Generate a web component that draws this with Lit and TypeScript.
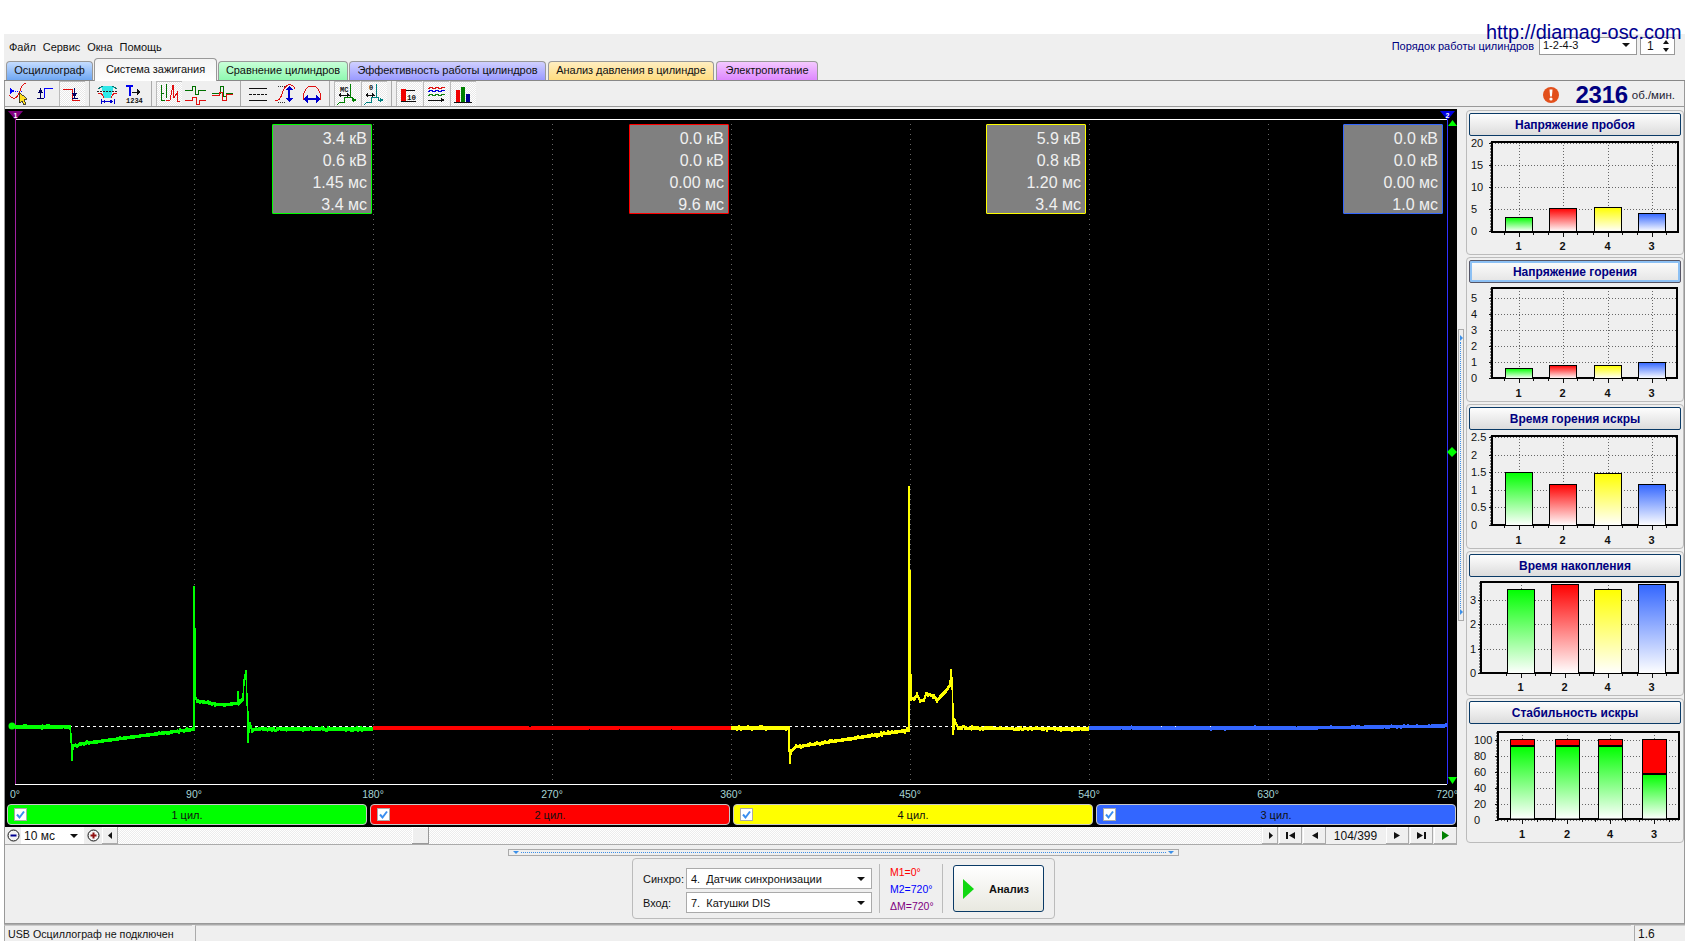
import { LitElement, html, css, svg } from "lit";
import { customElement } from "lit/decorators.js";

const GREEN = "#00ff00", RED = "#ff0000", YELLOW = "#ffff00", BLUE = "#3366ff";
const CYL = [
  { n: "1", c: "green" },
  { n: "2", c: "red" },
  { n: "4", c: "yellow" },
  { n: "3", c: "blue" },
];

let seed = 17;
const rnd = () => {
  seed = (seed * 16807) % 2147483647;
  return seed / 2147483647;
};
function trace(pts: number[][], amp: number): string {
  let d = `M${pts[0][0]} ${pts[0][1]}`;
  for (let i = 1; i < pts.length; i++) {
    const [x0, y0] = pts[i - 1];
    const [x1, y1] = pts[i];
    if (x1 - x0 < 2) {
      d += `L${x1} ${y1}`;
      continue;
    }
    for (let x = x0 + 1; x <= x1; x++) {
      const y = y0 + ((y1 - y0) * (x - x0)) / (x1 - x0);
      const j = rnd() > 0.72 ? (rnd() - 0.5) * amp : 0;
      d += `L${x} ${(y + j).toFixed(1)}`;
    }
  }
  return d;
}

const greenPts = [[15,726],[70,726],[71,735],[72,759],[73,745],[80,743],[194,728],[194,586],[195,640],[195,695],[197,700],[215,703],[225,704],[238,702],[238,691],[239,702],[243,698],[244,680],[246,670],[247,700],[248,715],[248,741],[249,728],[250,722],[252,729],[260,728],[373,728]];
const yellowPts = [[731,727],[789,727],[789,745],[790,762],[791,750],[796,746],[909,729],[909,486],[910,595],[911,698],[915,698],[917,693],[920,700],[924,699],[926,694],[935,695],[937,700],[940,696],[946,690],[950,684],[951,669],[952,680],[953,710],[953,733],[955,721],[958,727],[1089,728]];
const redPts = [[373,727],[731,727]];
const bluePts = [[1089,727],[1300,727],[1447,725]];

const ANGLES = [0, 90, 180, 270, 360, 450, 540, 630, 720];
const BOXES = [
  { l: 267, c: "green", v: ["3.4 кВ", "0.6 кВ", "1.45 мс", "3.4 мс"] },
  { l: 624, c: "red", v: ["0.0 кВ", "0.0 кВ", "0.00 мс", "9.6 мс"] },
  { l: 981, c: "yellow", v: ["5.9 кВ", "0.8 кВ", "1.20 мс", "3.4 мс"] },
  { l: 1338, c: "blue", v: ["0.0 кВ", "0.0 кВ", "0.00 мс", "1.0 мс"] },
];

const steps = (labels: string[], y0: number, st: number) => labels.map((l, i) => [l, y0 + i * st] as [string, number]);
const CHARTS = [
  { title: "Напряжение пробоя", top: 110, f: [1492, 142, 1678, 232], lx: 1471, ticks: steps(["20", "15", "10", "5", "0"], 143, 22), bx: [1505, 1549, 1594, 1638], w: 27, tops: [217, 208, 207, 213], base: 231, xl: 250 },
  { title: "Напряжение горения", focus: true, top: 257, f: [1492, 288, 1677, 378], lx: 1471, ticks: steps(["5", "4", "3", "2", "1", "0"], 298, 16), bx: [1505, 1549, 1594, 1638], w: 27, tops: [368, 365, 365, 362], base: 378, xl: 397 },
  { title: "Время горения искры", top: 404, f: [1492, 436, 1677, 525], lx: 1471, ticks: steps(["2.5", "2", "1.5", "1", "0.5", "0"], 437, 17.6), bx: [1505, 1549, 1594, 1638], w: 27, tops: [472, 484, 473, 484], base: 525, xl: 544 },
  { title: "Время накопления", top: 551, f: [1481, 582, 1678, 673], lx: 1470, ticks: steps(["3", "2", "1", "0"], 600, 24.4), bx: [1507, 1551, 1594, 1638], w: 27, tops: [589, 584, 589, 584], base: 673, xl: 691 },
  { title: "Стабильность искры", top: 698, f: [1498, 732, 1679, 819], lx: 1474, ticks: steps(["100", "80", "60", "40", "20", "0"], 740, 16), bx: [1510, 1555, 1598, 1642], w: 24, tops: [739, 739, 739, 739], base: 819, xl: 838, split: [745, 745, 745, 773] },
];

const ICONS = [
  svg`<path d="M5 7l5 3-5 3z" fill="#0000ff"/><path d="M10 10h7" stroke="#0000ff" stroke-dasharray="1 1"/><path d="M4 14q3 4 6 3t5-7q2-7 6-8" stroke="#e01010" fill="none"/><path d="M14 11l0 11 3-2 2 4 2-1-2-4 3-1z" fill="#ffe020" stroke="#222" stroke-width=".8"/>`,
  svg`<path d="M12 17V7h9" stroke="#0000ff" fill="none"/><path d="M8.500 9v8M5 17h7" stroke="#000060" fill="none"/><path d="M6 12l2.500-5 2.500 5z" fill="#000060"/>`,
  svg`<path d="M4 8h9v11h8" stroke="#e01010" fill="none"/><path d="M15.500 7v7M13 17h6" stroke="#000060" fill="none"/><path d="M13 12l2.500 5 2.500-5z" fill="#000060"/>`,
  svg`<path d="M7 5h13l-2 7-1 5h-7l-1-5z" fill="#30e8e8"/><path d="M3 10h21" stroke="#222" stroke-dasharray="2 1"/><path d="M4 8q3-2 5-3M23 8q-3-2-5-3" stroke="#107070" fill="none"/><path d="M4 13q4-2 6 4M23 13q-4-2-6 4" stroke="#e01010" fill="none"/><path d="M7 18v5M20 18v5M8 20.500h11" stroke="#0000d0" fill="none"/><path d="M8 20.500l3-2v4zM19 20.500l-3-2v4z" fill="#0000d0"/>`,
  svg`<path d="M5 5h7M8.500 5v10" stroke="#0000ee" fill="none" stroke-width="2"/><path d="M11 11h8" stroke="#111"/><path d="M16 8l4 3-4 3z" fill="#111"/><text x="5" y="22" font-family="Liberation Mono, monospace" font-size="7" font-weight="700" fill="#111">1234</text>`,
  svg`<path d="M5 4v15h4M5 12h3M10 3v14" stroke="#007000" fill="none"/><path d="M10 19h4l3-15 1 13 3-5v8h3" stroke="#e01010" fill="none"/>`,
  svg`<path d="M2 9h7V5h3v8h3V9h8" stroke="#007000" fill="none"/><path d="M2 19h7v-3h4v7h3v-4h7" stroke="#e01010" fill="none"/>`,
  svg`<path d="M2 12h8V5h3v10h3v-3h7" stroke="#007000" fill="none"/><path d="M2 14h7v-3h3v8h4v-6h7" stroke="#e01010" fill="none"/>`,
  svg`<path d="M4 7h18M4 19.500h18" stroke="#111"/><path d="M4 13h18" stroke="#111" stroke-dasharray="3 1"/>`,
  svg`<path d="M6 5h8M6 21h8" stroke="#333" stroke-dasharray="1 1"/><path d="M3 20q5 0 7-7t6-9q5-1 7 4" stroke="#e01010" fill="none"/><path d="M17 8v10" stroke="#0000d0" stroke-width="2"/><path d="M13 9l4-4 4 4zM13 17l4 4 4-4z" fill="#0000d0"/>`,
  svg`<path d="M4 19c0-9 4-14 9-14s9 5 9 14" stroke="#e01010" fill="none"/><path d="M7 18h12" stroke="#0000d0" stroke-width="2"/><path d="M9 14l-5 4 5 4zM17 14l5 4-5 4z" fill="#0000d0"/>`,
  svg`<text x="6" y="11" font-family="Liberation Mono, monospace" font-size="7" font-weight="700" fill="#111">MC</text><path d="M5 14h11" stroke="#111"/><path d="M16 3v13h2v3h4M3 24l3-3h4v-5h6" stroke="#008000" fill="none"/><path d="M19 17l4 2-4 2z" fill="#008000"/><path d="M4 14l3-2v4zM16 14l-3-2v4z" fill="#111"/>`,
  svg`<text x="8" y="9" font-family="Liberation Mono, monospace" font-size="7" font-weight="700" fill="#111">0</text><path d="M5 14h9" stroke="#111"/><path d="M15 3v13h2v3h5M3 24l3-3h4v-5h5" stroke="#008080" fill="none"/><path d="M19 17l4 2-4 2z" fill="#008080"/><path d="M4 14l3-2v4zM14 14l-3-2v4z" fill="#111"/>`,
  svg`<rect x="5" y="8" width="5" height="12" fill="#f00000"/><path d="M10 9.500h9M5 20.500h15" stroke="#111"/><text x="11" y="19" font-family="Liberation Mono, monospace" font-size="7.500" font-weight="700" fill="#111">10</text>`,
  svg`<path d="M5 8l3-2 3 2 3-2 3 2 3-2 2 1" stroke="#e01010" fill="none"/><path d="M5 11l3-2 3 2 3-2 3 2 3-2 2 1" stroke="#0000e0" fill="none"/><path d="M5 15l3-2 3 2 3-2 3 2 3-2 2 1" stroke="#108010" fill="none"/><path d="M5 19h14" stroke="#111"/><path d="M18 17l4 2-4 2z" fill="#111"/>`,
  svg`<rect x="6" y="9" width="4" height="12" fill="#f00000"/><rect x="11" y="6" width="4" height="15" fill="#008000"/><rect x="16" y="13" width="4" height="8" fill="#000090"/><path d="M4 21.500h18" stroke="#111"/>`,
];
const GROUPS = [
  { ids: [0, 1, 2], on: [2] },
  { ids: [3, 4], on: [] as number[] },
  { ids: [5, 6, 7], on: [5] },
  { ids: [8, 9, 10], on: [] as number[] },
  { ids: [11, 12], on: [11, 12] },
  { ids: [13, 14, 15], on: [13, 14, 15] },
];

const TABS = [
  { t: "Осциллограф", c: "t1" },
  { t: "Система зажигания", c: "t2" },
  { t: "Сравнение цилиндров", c: "t3" },
  { t: "Эффективность работы цилиндров", c: "t4" },
  { t: "Анализ давления в цилиндре", c: "t5" },
  { t: "Электропитание", c: "t6" },
];

@customElement("app-root")
export class AppRoot extends LitElement {
  static styles = css`
    :host {
      display: block;
      position: relative;
      width: 1696px;
      height: 946px;
      box-sizing: border-box;
      padding: 34px 11px 5px 4px;
      background: #fff;
      overflow: hidden;
      font: 11px "Liberation Sans", Arial, sans-serif;
      color: #111;
    }
    .shell { height: 100%; background: #efefef; display: flex; flex-direction: column; }
    .watermark { position: absolute; left: 1486px; top: 20px; font-size: 19.900px; color: #000090; line-height: 24px; white-space: nowrap; }
    .topbar { height: 24px; display: flex; justify-content: space-between; align-items: flex-start; padding: 3px 10px 0 5px; box-sizing: border-box; }
    .menu { display: flex; gap: 7px; padding-top: 4px; letter-spacing: -.05px; }
    .order { display: flex; align-items: center; color: #000080; }
    .sel { background: #fff; border: 1px solid #999; box-sizing: border-box; display: flex; align-items: center; justify-content: space-between; color: #111; }
    .sel1 { width: 98px; height: 18px; margin-left: 5px; padding: 0 6px 2px 3px; }
    .sel2 { width: 35px; height: 18px; margin-left: 3px; padding: 0 5px 0 6px; font-size: 12px; }
    .arrow { width: 0; height: 0; border: 4px solid transparent; border-top: 4px solid #111; border-bottom: 0; }
    .spin { display: flex; flex-direction: column; gap: 4px; }
    .spin i { display: block; width: 0; height: 0; border: 3.500px solid transparent; }
    .spin i:first-child { border-top: 0; border-bottom: 4px solid #111; }
    .spin i:last-child { border-bottom: 0; border-top: 4px solid #111; }
    .tabs { height: 23px; display: flex; align-items: flex-end; gap: 1px; padding-left: 2px; border-bottom: 1px solid #888; box-sizing: border-box; letter-spacing: -.05px; }
    .tab { height: 19px; padding-bottom: 2px; border: 1px solid #999; border-bottom: 0; border-radius: 4px 4px 0 0; box-sizing: border-box; display: flex; align-items: center; justify-content: center; white-space: nowrap; }
    .t1 { width: 87px; background: linear-gradient(#c4dcff, #6fa7f2); }
    .t2 { width: 123px; height: 23px; margin-bottom: -1px; position: relative; padding-bottom: 3px; background: linear-gradient(#f4f4f4, #fff); }
    .t3 { width: 130px; background: linear-gradient(#c8ffd8, #8ff8b0); }
    .t4 { width: 197px; background: linear-gradient(#d0d0ff, #9a9aff); }
    .t5 { width: 166px; margin-left: 1px; background: linear-gradient(#ffeec0, #ffdc80); }
    .t6 { width: 102px; margin-left: 1px; background: linear-gradient(#f4c8ff, #de88ff); }
    .toolbar { height: 26px; display: flex; align-items: flex-start; border: 1px solid #999; border-width: 0 1px 1px; box-sizing: border-box; padding-right: 9px; }
    .tgroup { display: flex; gap: 1px; }
    .cell { width: 26px; height: 25px; display: block; shape-rendering: crispEdges; }
    .cell.on { background: repeating-conic-gradient(#fff 0 25%, #e8e8e8 0 50%) 0 0 / 2px 2px; box-shadow: inset 1px 1px 0 #bbb; }
    .sep { width: 1px; height: 25px; background: #aaa; margin: 0 4px; }
    .rpm { margin-left: auto; display: flex; align-items: center; height: 27px; color: #000080; }
    .rpm svg { margin-right: 16px; }
    .rpm b { font-size: 24px; letter-spacing: -.3px; margin-right: 4px; }
    .rpm span { font-size: 11.500px; color: #223; }
    .main { flex: 1; display: flex; gap: 7px; padding: 2px 2px 0 0; border: 1px solid #999; border-width: 0 1px 1px; box-sizing: border-box; min-height: 0; }
    .left { width: 1454px; }
    .scope { width: 1452px; height: 718px; background: #000; position: relative; }
    .scope > svg { display: block; }
    .box { position: absolute; top: 15px; width: 100px; height: 90px; box-sizing: border-box; background: #808080; border: 1px solid; border-radius: 1px; padding: 3px 4px 0 0; color: #f0f0f0; font-size: 16px; line-height: 22px; text-align: right; }
    .b-green { border-color: #00ff00; }
    .b-red { border-color: #ff0000; }
    .b-yellow { border-color: #ffff00; }
    .b-blue { border-color: #3366ff; }
    .cyls { display: grid; grid-template-columns: repeat(4, 1fr); gap: 3px; padding: 0 1px 0 2px; }
    .cyl { height: 21px; border: 1px solid #c8c8c8; border-radius: 4px; box-sizing: border-box; display: flex; align-items: center; justify-content: center; position: relative; color: #111; }
    .c-green { background: #00ff00; }
    .c-red { background: #ff0000; }
    .c-yellow { background: #ffff00; }
    .c-blue { background: #3366ff; }
    .check { position: absolute; left: 6px; top: 3px; width: 13px; height: 13px; background: #fff; border: 1px solid #aaa; box-sizing: border-box; }
    .check svg { display: block; }
    .scroll { height: 18px; width: 1452px; display: flex; align-items: stretch; border-bottom: 1px solid #aaa; box-sizing: border-box; padding-left: 1px; }
    .nb { width: 23px; background: #efefef; box-shadow: inset -1px -1px 0 #aaa, inset 1px 1px 0 #fff; display: flex; align-items: center; justify-content: center; margin-left: 1px; }
    .nb.sm { width: 16px; }
    .rnd { width: 15px; display: flex; align-items: center; justify-content: center; background: #eee; }
    .zoomsel { width: 63px; background: #fff; display: flex; align-items: center; justify-content: space-between; padding: 0 6px 0 3px; box-sizing: border-box; font-size: 12px; margin-right: 2px; }
    .track { flex: 1; position: relative; background: repeating-conic-gradient(#fff 0 25%, #ececec 0 50%) 0 0 / 2px 2px; }
    .thumb { position: absolute; left: 294px; top: 0; width: 17px; height: 17px; background: #efefef; box-shadow: inset -1px -1px 0 #999, inset 1px 1px 0 #fff; }
    .counter { width: 59px; margin-left: 0; display: flex; align-items: center; justify-content: center; background: #f0f0f0; font-size: 12px; }
    .vsplit { position: absolute; left: 1458px; top: 329px; width: 6px; height: 292px; border: 1px solid #aaa; box-sizing: border-box; }
    .vsplit::before { content: ""; position: absolute; top: 12px; bottom: 12px; left: 1px; border-left: 1px dotted #3b8fe8; }
    .vsplit i { position: absolute; left: 1px; border: 3px solid transparent; border-left: 3px solid #3b8fe8; border-right: 0; }
    .vsplit i:first-child { top: 5px; }
    .vsplit i:last-child { bottom: 5px; }
    .hsplit { margin: 4px 0 0 503px; width: 671px; height: 7px; border: 1px solid #aaa; box-sizing: border-box; position: relative; }
    .hsplit::before { content: ""; position: absolute; left: 12px; right: 12px; top: 2px; border-top: 1px dotted #3b8fe8; }
    .hsplit i { position: absolute; top: 1px; border: 3px solid transparent; border-top: 3px solid #3b8fe8; border-bottom: 0; }
    .hsplit i:first-child { left: 4px; }
    .hsplit i:last-child { right: 4px; }
    .ana { margin: 2px 0 0 627px; width: 423px; height: 61px; border: 1px solid #bbb; border-radius: 4px; box-sizing: border-box; display: flex; align-items: center; }
    .ana-l { display: grid; grid-template-columns: 43px 186px; row-gap: 3px; align-items: center; padding: 4px 0 0 10px; }
    .dd { height: 21px; background: #fff; border: 1px solid #aaa; box-sizing: border-box; display: flex; align-items: center; justify-content: space-between; padding: 0 6px 0 4px; white-space: pre; }
    .vl { width: 1px; height: 49px; background: #bbb; }
    .marks { width: 62px; padding: 2px 0 0 10px; box-sizing: border-box; line-height: 17px; font-size: 10.500px; }
    .m1 { color: #ff0000; }
    .m2 { color: #0000ff; }
    .m3 { color: #800080; }
    .run { margin-left: 10px; width: 91px; height: 47px; border: 1px solid #0a3a66; border-radius: 3px; box-sizing: border-box; background: linear-gradient(#fff, #e8e8e0); display: flex; align-items: center; font-weight: 700; }
    .run svg { margin: 0 15px 0 9px; }
    .right { width: 216px; margin-top: 1px; display: grid; grid-template-rows: repeat(5, 145px); gap: 2px; }
    .panel { border: 1px solid #bbb; border-radius: 4px; box-sizing: border-box; padding: 2px 2px 0; }
    .phead { height: 23px; border: 1px solid #0a3a66; border-radius: 2px; box-sizing: border-box; background: linear-gradient(#fdfdfd, #dcdcdc); color: #000080; font-weight: 700; font-size: 12px; display: flex; align-items: center; justify-content: center; }
    .phead.focus { border-color: #556; box-shadow: inset 0 0 0 2px #8cc0f4; background: linear-gradient(#fdfdfd, #e4e4e4); }
    .panel svg { display: block; margin-left: -2px; }
    .status { height: 17px; border-top: 1px solid #aaa; display: flex; gap: 3px; box-sizing: border-box; }
    .scell { border-left: 1px solid #aaa; border-top: 1px solid #ccc; display: flex; align-items: center; padding-left: 3px; box-sizing: border-box; white-space: nowrap; font-size: 10.700px; }
    .s1 { width: 188px; }
    .s2 { flex: 1; }
    .s3 { width: 51px; font-size: 12px; }
  `;

  private tri(d: string, fill = "#111") {
    return html`<svg width="11" height="11" viewBox="0 0 11 11"><path d=${d} fill=${fill}></path></svg>`;
  }

  private renderScope() {
    seed = 17;
    const fat = (pts: number[][], amp: number, color: string) => {
      const d = trace(pts, amp);
      return [-1, 0, 1].map((o) => svg`<path d=${d} transform="translate(0 ${o + 1})" stroke=${color} stroke-width="1.500"></path>`);
    };
    return svg`
      ${ANGLES.map((a, i) => {
        const x = 15 + i * 179;
        return svg`
          ${i > 0 && i < 8 ? svg`<path d="M${x + 0.5} 119V787" stroke="#666" stroke-dasharray="1 4"></path>` : ""}
          <text x=${x} y="798" text-anchor="middle" font-size="10.500" font-family="Liberation Sans, Arial, sans-serif" fill="#a6d4d4">${a}°</text>`;
      })}
      <path d="M15 119.500H1447M15 784.500H1447" stroke="#fff" stroke-width="1"></path>
      <path d="M15 726.500H1447" stroke="#fff" stroke-dasharray="3 3"></path>
      <path d="M15.500 111V784" stroke="#a020a0"></path>
      <path d="M1447.500 111V784" stroke="#3030ff"></path>
      <g fill="none" shape-rendering="crispEdges">
        ${fat(greenPts, 3, GREEN)}
        ${fat(redPts, 1, RED)}
        ${fat(yellowPts, 3, YELLOW)}
        ${fat(bluePts, 2, BLUE)}
      </g>
      <circle cx="12" cy="726" r="3.500" fill=${GREEN}></circle>
      <path d="M8 111h15l-7.500 9z" fill="#800080"></path>
      <text x="15.500" y="118" text-anchor="middle" font-size="7" font-weight="700" font-family="Liberation Sans, Arial, sans-serif" fill="#fff">1</text>
      <path d="M1440 111h15l-7.500 9z" fill="#0000e0"></path>
      <text x="1447.500" y="118" text-anchor="middle" font-size="7" font-weight="700" font-family="Liberation Sans, Arial, sans-serif" fill="#fff">2</text>
      <path d="M1448 126l4.500-6 4.500 6z" fill=${GREEN}></path>
      <path d="M1452 447l5 5-5 5-5-5z" fill=${GREEN}></path>
      <path d="M1448 777h9l-4.500 7z" fill=${GREEN}></path>
    `;
  }

  private renderChart(c: (typeof CHARTS)[number]) {
    const [l, t, r, b] = c.f;
    const vy = c.top + 26;
    const colors = [GREEN, RED, YELLOW, BLUE];
    const ids = ["g", "r", "y", "b"];
    const centres = c.bx.map((x) => x + c.w / 2);
    const ticks: number[] = [];
    centres.forEach((m) => { for (const d of [-14.7, 0, 14.7]) ticks.push(m + d); });
    return html`<svg width="214" height="118" viewBox="1467 ${vy} 214 118">
      <defs>
        ${colors.map((col, i) => svg`<linearGradient id="${ids[i]}${c.top}" x1="0" y1="0" x2="0" y2="1"><stop offset="0" stop-color=${col}></stop><stop offset="1" stop-color="#fff"></stop></linearGradient>`)}
      </defs>
      ${c.ticks.map(([txt, y]) => svg`
        <path d="M${l} ${Math.round(y) + 0.5}H${r}" stroke="#666" stroke-dasharray="1 2"></path>
        <path d="M${l - 3} ${Math.round(y) + 0.5}H${l}" stroke="#111"></path>
        <text x=${c.lx} y=${y + 4} font-size="11" font-family="Liberation Sans, Arial, sans-serif" fill="#111">${txt}</text>`)}
      ${centres.map((m) => svg`<path d="M${Math.round(m) + 0.5} ${t}V${b}" stroke="#666" stroke-dasharray="1 2"></path>`)}
      ${ticks.map((x) => svg`<path d="M${Math.round(x) + 0.5} ${b}v3" stroke="#111"></path>`)}
      ${centres.map((m) => svg`<path d="M${Math.round(m) + 0.5} ${b}v5" stroke="#111"></path>`)}
      <path d="M${l - 1} ${t}V${b}" stroke="#111" stroke-dasharray="2 1"></path>
      <rect x=${l} y=${t} width=${r - l} height=${b - t} fill="none" stroke="#000" stroke-width="2" shape-rendering="crispEdges"></rect>
      ${c.bx.map((x, i) => {
        const top = c.tops[i];
        const sp = (c as any).split ? (c as any).split[i] : 0;
        if (sp) {
          return svg`
            <rect x=${x + 0.5} y=${top + 0.5} width=${c.w} height=${sp - top} fill=${RED} stroke="#000"></rect>
            <rect x=${x + 0.5} y=${sp + 1.5} width=${c.w} height=${c.base - sp - 1.5} fill="url(#g${c.top})" stroke="#000"></rect>`;
        }
        return svg`<rect x=${x + 0.5} y=${top + 0.5} width=${c.w} height=${c.base - top} fill="url(#${ids[i]}${c.top})" stroke="#000"></rect>`;
      })}
      ${centres.map((m, i) => svg`<text x=${m} y=${c.xl} text-anchor="middle" font-size="11" font-weight="700" font-family="Liberation Sans, Arial, sans-serif" fill="#111">${CYL[i].n}</text>`)}
    </svg>`;
  }

  render() {
    return html`
      <div class="shell">
        <div class="topbar">
          <div class="menu"><span>Файл</span><span>Сервис</span><span>Окна</span><span>Помощь</span></div>
          <div class="order">
            <span>Порядок работы цилиндров</span>
            <div class="sel sel1"><span>1-2-4-3</span><i class="arrow"></i></div>
            <div class="sel sel2"><span>1</span><div class="spin"><i></i><i></i></div></div>
          </div>
        </div>
        <div class="tabs">${TABS.map((t) => html`<div class="tab ${t.c}">${t.t}</div>`)}</div>
        <div class="toolbar">
          ${GROUPS.map((g, gi) => html`
            ${gi > 0 ? html`<div class="sep"></div>` : ""}
            <div class="tgroup">
              ${g.ids.map((id) => html`<svg class="cell ${g.on.includes(id) ? "on" : ""}" viewBox="0 0 26 25" width="26" height="25">${ICONS[id]}</svg>`)}
            </div>`)}
          <div class="rpm">
            <svg width="18" height="18" viewBox="0 0 18 18"><circle cx="9" cy="9" r="8" fill="#e2501c"></circle><path d="M7.500 3.500h3l-.6 7h-1.800z" fill="#fff"></path><circle cx="9" cy="13" r="1.600" fill="#fff"></circle></svg>
            <b>2316</b><span>об./мин.</span>
          </div>
        </div>
        <div class="main">
          <div class="left">
            <div class="scope">
              <svg width="1452" height="695" viewBox="5 109 1452 695">${this.renderScope()}</svg>
              ${BOXES.map((b) => html`<div class="box b-${b.c}" style="left:${b.l}px">${b.v.map((v) => html`<div>${v}</div>`)}</div>`)}
              <div class="cyls">
                ${CYL.map((c) => html`<div class="cyl c-${c.c}">
                  <span class="check"><svg width="11" height="11" viewBox="0 0 11 11"><path d="M2 5.500l2.500 3L9 2.500" fill="none" stroke="#3a8ef0" stroke-width="2"></path></svg></span>
                  ${c.n} цил.
                </div>`)}
              </div>
            </div>
            <div class="scroll">
              <div class="rnd"><svg width="13" height="13" viewBox="0 0 13 13"><circle cx="6.500" cy="6.500" r="5.500" fill="#f4f4f4" stroke="#111"></circle><path d="M3.500 6.500h6" stroke="#000090" stroke-width="2"></path></svg></div>
              <div class="zoomsel"><span>10 мс</span><i class="arrow"></i></div>
              <div class="rnd"><svg width="13" height="13" viewBox="0 0 13 13"><circle cx="6.500" cy="6.500" r="5.500" fill="#f4f4f4" stroke="#111"></circle><path d="M3.500 6.500h6M6.500 3.500v6" stroke="#901010" stroke-width="2"></path></svg></div>
              <div class="nb sm">${this.tri("M7 2v7L3 5.500z")}</div>
              <div class="track"><div class="thumb"></div></div>
              <div class="nb sm">${this.tri("M4 2v7l4-3.500z")}</div>
              <div class="nb">${this.tri("M1 2h2v7H1zM10 2v7L4 5.500z")}</div>
              <div class="nb">${this.tri("M9 2v7L3 5.500z")}</div>
              <div class="counter">104/399</div>
              <div class="nb">${this.tri("M2 2v7l6-3.500z")}</div>
              <div class="nb">${this.tri("M1 2v7l6-3.500zM8 2h2v7H8z")}</div>
              <div class="nb">${this.tri("M2 1v9l7-4.500z", "#008000")}</div>
            </div>
            <div class="hsplit"><i></i><i></i></div>
            <div class="ana">
              <div class="ana-l">
                <span>Синхро:</span>
                <div class="dd"><span>4.  Датчик синхронизации</span><i class="arrow"></i></div>
                <span>Вход:</span>
                <div class="dd"><span>7.  Катушки DIS</span><i class="arrow"></i></div>
              </div>
              <div class="vl" style="margin-left:7px"></div>
              <div class="marks">
                <div class="m1">M1=0°</div>
                <div class="m2">M2=720°</div>
                <div class="m3">ΔM=720°</div>
              </div>
              <div class="vl"></div>
              <div class="run">
                <svg width="11" height="20" viewBox="0 0 11 20"><path d="M0 0l11 10L0 20z" fill="#10d810"></path></svg>
                Анализ
              </div>
            </div>
          </div>
          <div class="right">
            ${CHARTS.map((c) => html`<div class="panel">
              <div class="phead ${(c as any).focus ? "focus" : ""}">${c.title}</div>
              ${this.renderChart(c)}
            </div>`)}
          </div>
        </div>
        <div class="status">
          <div class="scell s1">USB Осциллограф не подключен</div>
          <div class="scell s2"></div>
          <div class="scell s3">1.6</div>
        </div>
      </div>
      <div class="vsplit"><i></i><i></i></div>
      <div class="watermark">http://diamag-osc.com</div>
    `;
  }
}
